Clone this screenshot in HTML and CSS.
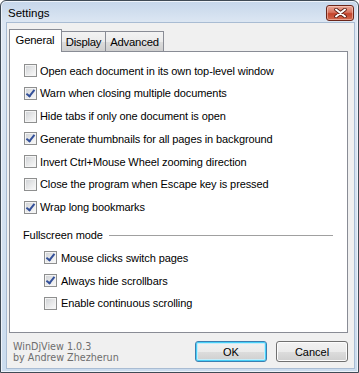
FILE: index.html
```html
<!DOCTYPE html>
<html lang="en">
<head>
    <meta charset="UTF-8">
    <title>Settings</title>
    <link rel="stylesheet" href="styles.css">
</head>
<body>
    <div class="window">
        <div class="titlebar">
            <span class="title">Settings</span>
            <button class="close" aria-label="Close">
                <svg width="13" height="10" viewBox="0 0 13 10">
                    <path d="M2 1.5 L11 8.5 M11 1.5 L2 8.5" stroke="#5a1d14" stroke-width="3.6" stroke-linecap="round"/>
                    <path d="M2 1.5 L11 8.5 M11 1.5 L2 8.5" stroke="#fff" stroke-width="2" stroke-linecap="round"/>
                </svg>
            </button>
        </div>

        <div class="client">
            <div class="tabs">
                <div class="tab active">General</div>
                <div class="tab display">Display</div>
                <div class="tab advanced">Advanced</div>
            </div>

            <div class="panel">
                <label class="check"><span class="box"></span>Open each document in its own top-level window</label>
                <label class="check"><span class="box checked"></span>Warn when closing multiple documents</label>
                <label class="check"><span class="box"></span>Hide tabs if only one document is open</label>
                <label class="check"><span class="box checked"></span>Generate thumbnails for all pages in background</label>
                <label class="check"><span class="box"></span>Invert Ctrl+Mouse Wheel zooming direction</label>
                <label class="check"><span class="box"></span>Close the program when Escape key is pressed</label>
                <label class="check"><span class="box checked"></span>Wrap long bookmarks</label>

                <div class="group">
                    <span>Fullscreen mode</span>
                    <span class="rule"></span>
                </div>
                <label class="check sub"><span class="box checked"></span>Mouse clicks switch pages</label>
                <label class="check sub"><span class="box checked"></span>Always hide scrollbars</label>
                <label class="check sub"><span class="box"></span>Enable continuous scrolling</label>
            </div>

            <div class="footer">
                <div class="about">WinDjView 1.0.3<br>by Andrew Zhezherun</div>
                <div class="buttons">
                    <button class="btn default">OK</button>
                    <button class="btn">Cancel</button>
                </div>
            </div>
        </div>
    </div>
</body>
</html>
```

FILE: styles.css
```css
:root {
    --face: #f0f0f0;
    --edge: #898c95;
    --text: #000;
}

* {
    margin: 0;
    padding: 0;
    box-sizing: border-box;
}

body {
    width: 359px;
    height: 373px;
    overflow: hidden;
    font-family: "Liberation Sans", Arial, sans-serif;
    font-size: 11px;
    letter-spacing: -0.1px;
    color: var(--text);
    background: #fff;
}

.window {
    width: 359px;
    height: 373px;
    border: 1px solid #3f4a55;
    border-radius: 6px 6px 0 0;
    background: linear-gradient(180deg, #c5d6ea 0, #dde7f3 22px, #cbdcee 100%);
    display: flex;
    flex-direction: column;
    box-shadow: inset 0 0 0 1px #eef3fa;
}

.titlebar {
    height: 21px;
    flex: none;
    display: flex;
    align-items: center;
    justify-content: space-between;
    padding: 0 4px 0 7px;
}

.title {
    font-size: 11.5px;
    letter-spacing: 0;
    padding-top: 2px;
}

.close {
    width: 28px;
    height: 16px;
    margin-top: 2px;
    border: 1px solid #6b2519;
    border-radius: 3px;
    background: linear-gradient(180deg, #e9a898 0, #d8735f 45%, #c3432b 55%, #d26a4f 100%);
    box-shadow: inset 0 0 0 1px rgba(255, 220, 210, 0.5);
    display: flex;
    align-items: center;
    justify-content: center;
}

.client {
    flex: 1;
    margin: 1px 4px 4px 6px;
    background: var(--face);
    display: flex;
    flex-direction: column;
    padding: 6px 6px 0 2px;
    box-shadow: 0 0 0 1px #a9bcd3;
}

/* tabs */
.tabs {
    height: 22px;
    flex: none;
    display: flex;
    align-items: flex-end;
    position: relative;
    z-index: 1;
}

.tab {
    height: 20px;
    border: 1px solid var(--edge);
    border-bottom: none;
    border-left: none;
    background: linear-gradient(180deg, #f3f3f3 0, #ebebeb 50%, #dddddd 51%, #cfcfcf 100%);
    display: flex;
    align-items: center;
    justify-content: center;
    font-size: 11.3px;
    letter-spacing: -0.2px;
    padding-top: 1px;
}

.tab.active {
    width: 53px;
    height: 23px;
    margin-bottom: -1px;
    border-left: 1px solid var(--edge);
    background: #fff;
    padding: 0 1px 2px 0;
}

.tab.display {
    width: 44px;
}

.tab.advanced {
    width: 58px;
}

/* options panel */
.panel {
    height: 282px;
    flex: none;
    background: #fff;
    border: 1px solid var(--edge);
    padding: 10px 14px 0 14px;
    display: flex;
    flex-direction: column;
    gap: 5.8px;
}

.check {
    height: 17px;
    display: flex;
    align-items: center;
    white-space: nowrap;
}

.check.sub {
    margin-left: 20px;
}

.box {
    width: 13px;
    height: 13px;
    flex: none;
    margin-right: 3px;
    border: 1px solid #8e8f8f;
    background: linear-gradient(135deg, #cdd0d4 0, #e6e7e8 50%, #fbfbfb 100%);
    box-shadow: inset 0 0 0 1px #f4f4f4;
    position: relative;
}

.sub .box {
    margin-right: 4px;
}

.box.checked::after {
    content: "";
    position: absolute;
    left: 3px;
    top: 0;
    width: 3px;
    height: 7px;
    border: solid #33509a;
    border-width: 0 2px 2px 0;
    transform: rotate(38deg);
}

.group {
    height: 17px;
    margin-top: 5px;
    margin-left: -1px;
    display: flex;
    align-items: center;
}

.rule {
    flex: 1;
    height: 1px;
    margin-left: 6px;
    background: #a0a0a0;
}

/* footer */
.footer {
    flex: 1;
    display: flex;
    justify-content: space-between;
    align-items: center;
    padding: 2px 0 0 4px;
}

.about {
    font-family: "DejaVu Sans", Verdana, sans-serif;
    font-size: 9.6px;
    letter-spacing: 0;
    line-height: 11px;
    color: #6d6d6d;
    margin-top: 0;
}

.buttons {
    display: flex;
    gap: 9px;
}

.btn {
    width: 72px;
    height: 21px;
    font-family: inherit;
    font-size: 11px;
    color: #000;
    border: 1px solid #707070;
    border-radius: 3px;
    background: linear-gradient(180deg, #f2f2f2 0, #ebebeb 50%, #dddddd 51%, #cfcfcf 100%);
    box-shadow: inset 0 0 0 1px #fcfcfc;
}

.btn.default {
    border-color: #3c7fb1;
    box-shadow: inset 0 0 0 1px #48d0f8, inset 0 0 0 2px #c4ecfa;
}
```
